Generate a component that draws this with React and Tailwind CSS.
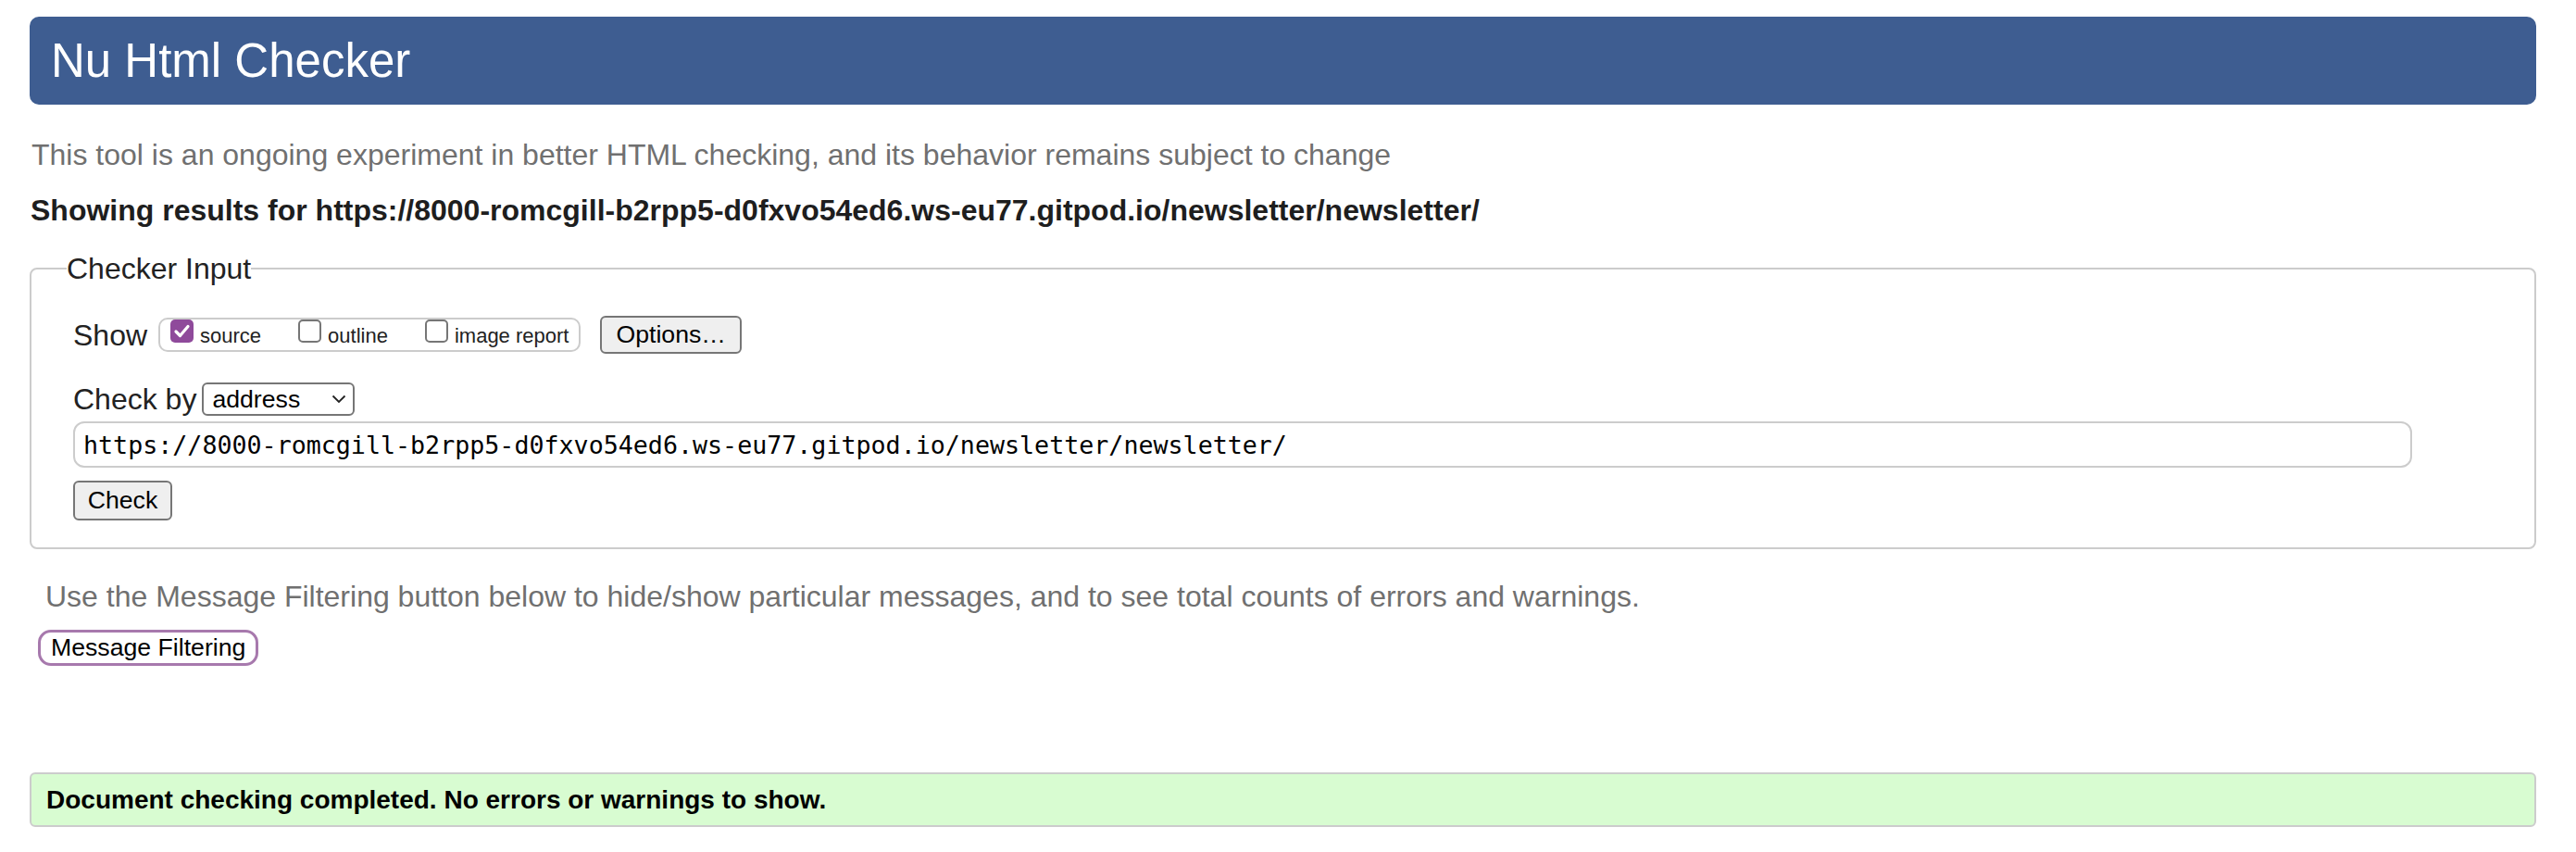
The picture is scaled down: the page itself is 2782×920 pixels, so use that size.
import React from "react";

const URL = "https://8000-romcgill-b2rpp5-d0fxvo54ed6.ws-eu77.gitpod.io/newsletter/newsletter/";

function Box({ checked }) {
  // hand-drawn checkbox, native ones render too small at this scale
  if (checked) {
    return (
      <span className="inline-block align-baseline w-[25px] h-[25px] mr-[7px] rounded-[5px] bg-[#8f4a9b]">
        <svg viewBox="0 0 25 25" className="w-[25px] h-[25px] block">
          <path d="M6 13 L10.5 17.5 L19 7.5" fill="none" stroke="#fff" strokeWidth="3.2" strokeLinecap="round" strokeLinejoin="round" />
        </svg>
      </span>
    );
  }
  return (
    <span className="inline-block align-baseline w-[25px] h-[25px] mr-[7px] rounded-[5px] border-2 border-[#767676] bg-white" />
  );
}

function Option({ checked, label }) {
  return (
    <label className="whitespace-nowrap text-[22px] leading-[33px] text-[#222]">
      <Box checked={checked} />
      {label}
    </label>
  );
}

export default function App() {
  return (
    <div className="min-h-screen bg-white pt-[18px] pl-[32px] pr-[43px] font-['Liberation_Sans',Arial,sans-serif] text-[#222]">
      {/* Title bar */}
      <div className="h-[95px] rounded-[10px] bg-[#3e5d91] flex items-center pl-[23px]">
        <h1 className="text-[51px] leading-none text-white font-normal">Nu Html Checker</h1>
      </div>

      <p className="mt-[34px] pl-[2px] text-[32px] leading-[40px] text-[#707070]">
        This tool is an ongoing experiment in better HTML checking, and its behavior remains subject to change
      </p>
      <p className="mt-[20px] pl-[1px] text-[32px] leading-[40px] font-bold text-[#1e1e1e]">
        Showing results for {URL}
      </p>

      {/* Checker input */}
      <fieldset className="mt-[23px] border-2 border-[#cccccc] rounded-[8px] pl-[45px] pr-[20px] pt-[31px] pb-[29px]">
        <legend className="-ml-[7px] text-[32px] leading-[40px] text-[#222]">Checker Input</legend>

        <div className="flex items-center h-[41px]">
          <span className="text-[32px] leading-[36px]">Show</span>
          <div className="ml-[12px] h-[37px] border-2 border-[#cccccc] rounded-[10px] pl-[11px] pr-[11px] flex items-center gap-[40px]">
            <Option checked label="source" />
            <Option label="outline" />
            <Option label="image report" />
          </div>
          <button className="ml-[21px] h-[41px] px-[15px] border-2 border-[#767676] rounded-[6px] bg-[#efefef] text-[26.67px] leading-none text-black">
            Options…
          </button>
        </div>

        <div className="mt-[31px] flex items-center h-[36px]">
          <span className="text-[32px] leading-[36px]">Check by</span>
          <div className="ml-[6px] w-[165px] h-[36px] border-2 border-[#767676] rounded-[6px] bg-white flex items-center justify-between pl-[9px] pr-[7px]">
            <span className="text-[26.67px] leading-none text-black">address</span>
            <svg viewBox="0 0 16 10" className="w-[16px] h-[10px]">
              <path d="M1.5 1.5 L8 8 L14.5 1.5" fill="none" stroke="#222" strokeWidth="1.8" />
            </svg>
          </div>
        </div>

        <input
          readOnly
          value={URL}
          className="mt-[6px] block w-[2526px] h-[50px] border-2 border-[#cccccc] rounded-[12px] pl-[9px] font-['DejaVu_Sans_Mono',monospace] text-[26.67px] text-black outline-none"
        />

        <button className="mt-[14px] block h-[43px] w-[107px] border-2 border-[#767676] rounded-[6px] bg-[#efefef] text-[26.67px] leading-none text-black">
          Check
        </button>
      </fieldset>

      <p className="mt-[31px] pl-[17px] text-[32px] leading-[40px] text-[#707070]">
        Use the Message Filtering button below to hide/show particular messages, and to see total counts of errors and warnings.
      </p>
      <button className="mt-[16px] ml-[9px] block h-[39px] px-[11px] border-[3px] border-[#a779ad] rounded-[14px] bg-white text-[26.67px] leading-none text-black">
        Message Filtering
      </button>

      <div className="mt-[115px] h-[59px] border-2 border-[#cccccc] rounded-[6px] bg-[#d8fcd1] flex items-center pl-[16px]">
        <span className="text-[28px] font-bold text-black">Document checking completed. No errors or warnings to show.</span>
      </div>
    </div>
  );
}
